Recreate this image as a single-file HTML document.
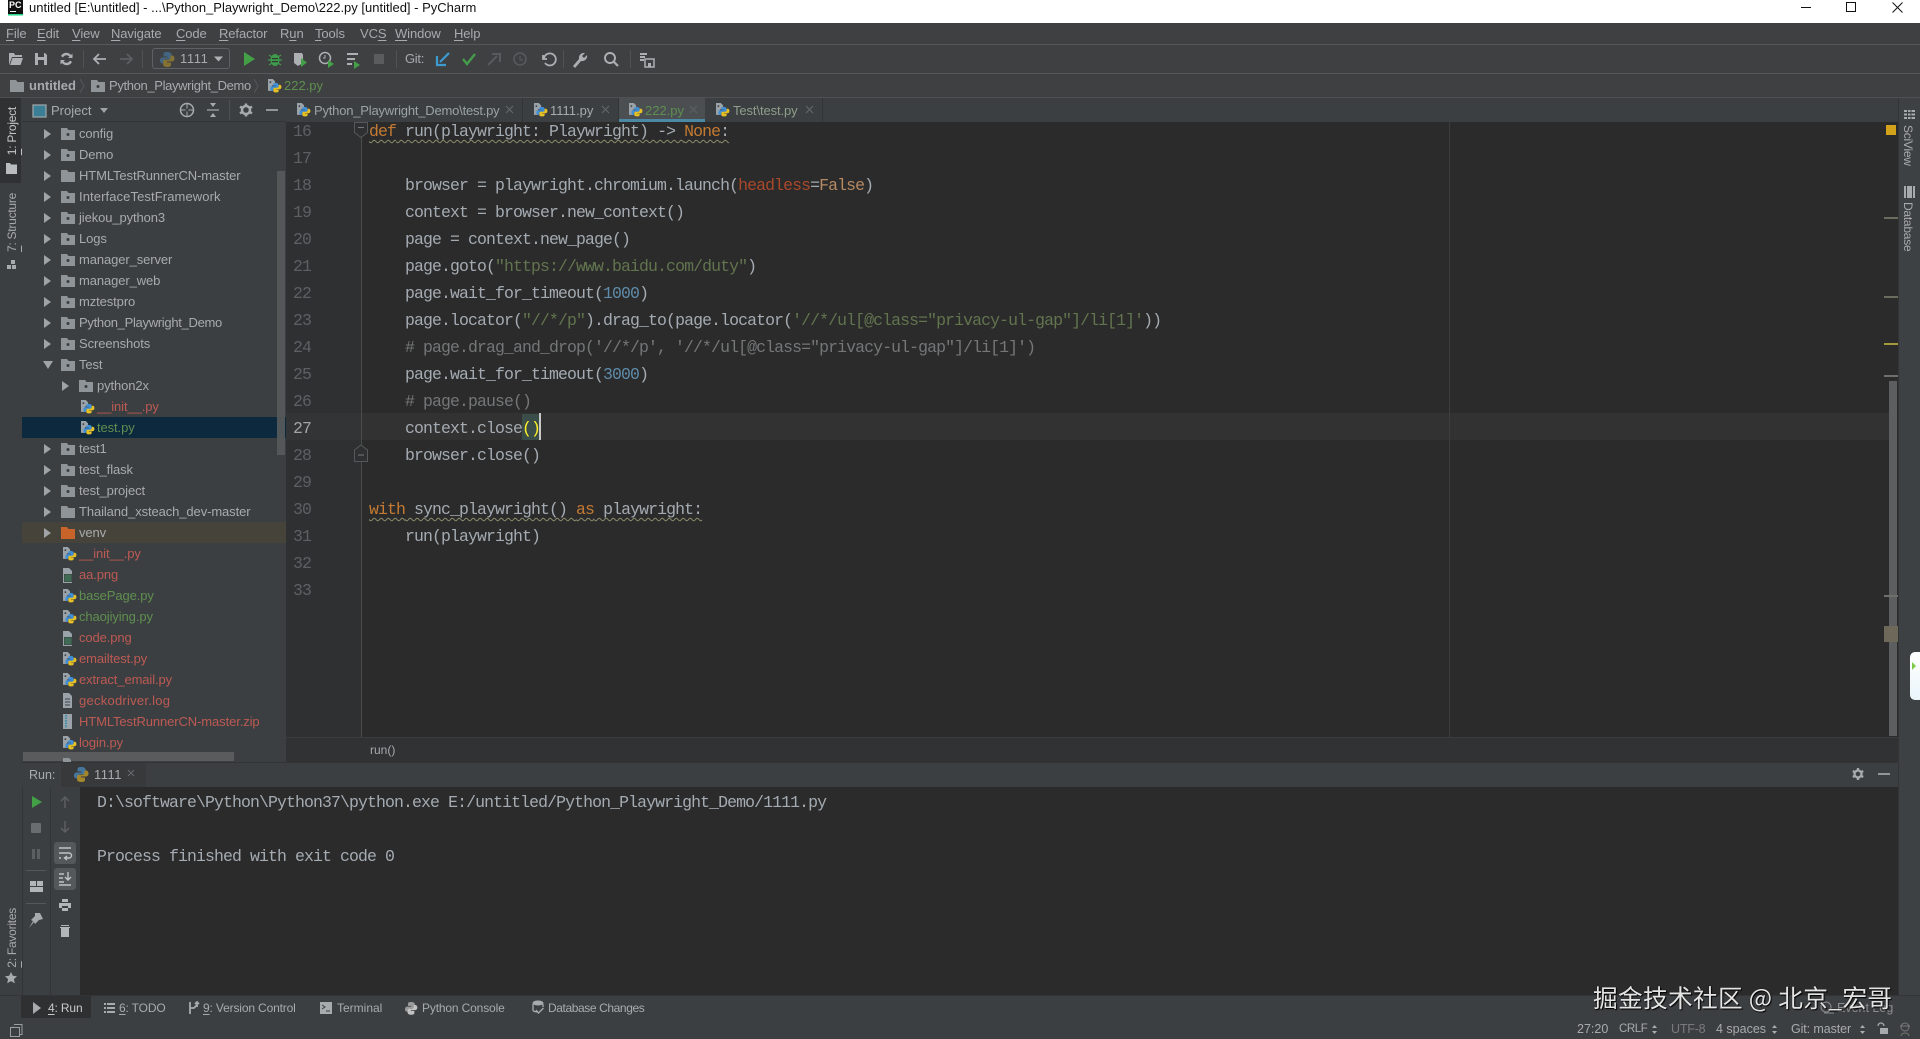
<!DOCTYPE html>
<html><head><meta charset="utf-8"><title>PyCharm</title>
<style>
html,body{margin:0;padding:0;width:1920px;height:1039px;overflow:hidden;background:#3c3f41}
body{position:relative;font-family:"Liberation Sans","Noto Sans CJK SC",sans-serif;font-size:13px;color:#a8abad}
div,span.t{position:absolute}
.b{position:absolute}
.t{position:absolute;white-space:pre;line-height:20px;letter-spacing:-.1px}
u{text-decoration-thickness:1px;text-underline-offset:2px}
.r{color:#bd5a54}.g{color:#5f8f50}.o{color:#c7662c}
.c{position:absolute;left:369px;white-space:pre;font-family:"Liberation Mono",monospace;font-size:16.5px;letter-spacing:-.9px;line-height:27px;color:#a4abb2;height:27px}
.n{position:absolute;left:293px;width:20px;font-family:"Liberation Mono",monospace;font-size:16.5px;letter-spacing:-.9px;line-height:27px;color:#5d6063}
.k{color:#c47a32}.s{color:#62744e}.m{color:#5f8cab}.h{color:#747678}.p{color:#a9482a}
.w{text-decoration:underline wavy #8d8d6c 1px;text-underline-offset:3px}
.v{writing-mode:vertical-rl;white-space:pre;position:absolute;line-height:16px;font-size:12px;letter-spacing:-.25px;color:#a8abad}
.vl{transform:rotate(180deg)}
.tb{font-size:12px;letter-spacing:-.15px;top:998px}
.st{font-size:12.5px;letter-spacing:0;top:1019px}
</style></head>
<body>
<!-- backgrounds -->
<div class="b" style="left:0;top:0;width:1920px;height:23px;background:#fff"></div>
<div class="b" style="left:0;top:23px;width:1920px;height:74px;background:#3e4042"></div>
<div class="b" style="left:0;top:44px;width:1920px;height:1px;background:#555759"></div>
<div class="b" style="left:0;top:73px;width:1920px;height:1px;background:#555759"></div>
<div class="b" style="left:0;top:97px;width:1920px;height:1px;background:#4e5052"></div>
<div class="b" style="left:0;top:98px;width:22px;height:899px;background:#3c3f41"></div>
<div class="b" style="left:0;top:98px;width:21px;height:85px;background:#2f3132"></div>
<div class="b" style="left:22px;top:98px;width:264px;height:665px;background:#3c3f41;overflow:hidden"></div>
<div class="b" style="left:22px;top:121px;width:264px;height:1px;background:#323435"></div>
<div class="b" style="left:22px;top:417px;width:264px;height:21px;background:#0d293e"></div>
<div class="b" style="left:22px;top:522px;width:264px;height:21px;background:#46433a"></div>
<div class="b" style="left:277px;top:171px;width:8px;height:284px;background:#55585a;opacity:.95"></div>
<div class="b" style="left:23px;top:752px;width:211px;height:9px;background:#595b5d"></div>
<!-- tab bar -->
<div class="b" style="left:286px;top:98px;width:1612px;height:24px;background:#3c3f41"></div>
<div class="b" style="left:618px;top:98px;width:87px;height:21px;background:#4b4f52"></div>
<div class="b" style="left:618px;top:119px;width:87px;height:3px;background:#4a88a3"></div>
<div class="b" style="left:522px;top:98px;width:1px;height:24px;background:#323435"></div>
<div class="b" style="left:618px;top:98px;width:1px;height:24px;background:#323435"></div>
<div class="b" style="left:822px;top:98px;width:1px;height:24px;background:#323435"></div>
<!-- editor -->
<div class="b" style="left:286px;top:122px;width:1612px;height:615px;background:#2b2b2b"></div>
<div class="b" style="left:286px;top:122px;width:75px;height:615px;background:#2f3031"></div>
<div class="b" style="left:361px;top:413px;width:1528px;height:27px;background:#323232"></div>
<div class="b" style="left:286px;top:413px;width:75px;height:27px;background:#333435"></div>
<div class="b" style="left:361px;top:122px;width:1px;height:615px;background:#4a4c4e"></div>
<div class="b" style="left:1449px;top:122px;width:1px;height:615px;background:#3d3d3d"></div>
<div class="b" style="left:522px;top:414px;width:18px;height:26px;background:#3a4d48"></div>
<div class="b" style="left:539px;top:413px;width:2px;height:27px;background:#c8c8c8"></div>
<div class="b" style="left:286px;top:737px;width:1612px;height:1px;background:#3a3c3d"></div>
<div class="b" style="left:286px;top:738px;width:1612px;height:24px;background:#303233"></div>
<!-- right stripe -->
<div class="b" style="left:1886px;top:125px;width:10px;height:10px;background:#d4a21a"></div>
<div class="b" style="left:1884px;top:217px;width:14px;height:2px;background:#6b6c60"></div>
<div class="b" style="left:1884px;top:296px;width:14px;height:2px;background:#6b6c60"></div>
<div class="b" style="left:1884px;top:343px;width:14px;height:2px;background:#a39a3c"></div>
<div class="b" style="left:1884px;top:375px;width:14px;height:2px;background:#6e6f6a"></div>
<div class="b" style="left:1889px;top:381px;width:8px;height:355px;background:#5c5e5f"></div>
<div class="b" style="left:1884px;top:595px;width:14px;height:2px;background:#6e6f6a"></div>
<div class="b" style="left:1884px;top:626px;width:14px;height:16px;background:#6e685a"></div>
<div class="b" style="left:1898px;top:98px;width:22px;height:897px;background:#3e4143;border-left:1px solid #323435;box-sizing:border-box"></div>
<div class="b" style="left:1910px;top:652px;width:10px;height:48px;background:linear-gradient(#fff,#eaf5fb);border-radius:5px 0 0 5px"></div>
<!-- run panel -->
<div class="b" style="left:22px;top:762px;width:1876px;height:1px;background:#323435"></div>
<div class="b" style="left:22px;top:763px;width:1876px;height:24px;background:#3c3f41"></div>
<div class="b" style="left:61px;top:763px;width:85px;height:24px;background:#37393b"></div>
<div class="b" style="left:22px;top:787px;width:58px;height:208px;background:#3c3f41"></div>
<div class="b" style="left:22px;top:787px;width:1px;height:208px;background:#323435"></div>
<div class="b" style="left:50px;top:787px;width:1px;height:208px;background:#323435"></div>
<div class="b" style="left:80px;top:787px;width:1818px;height:208px;background:#2b2b2b"></div>
<div class="b" style="left:54px;top:842px;width:22px;height:22px;background:#55585a;border-radius:3px"></div>
<div class="b" style="left:54px;top:868px;width:22px;height:22px;background:#55585a;border-radius:3px"></div>
<div class="b" style="left:26px;top:870px;width:20px;height:1px;background:#555759"></div>
<div class="b" style="left:26px;top:903px;width:20px;height:1px;background:#555759"></div>
<!-- bottom -->
<div class="b" style="left:0;top:995px;width:1920px;height:44px;background:#3c3f41;border-top:1px solid #323435;box-sizing:border-box"></div>
<div class="b" style="left:21px;top:996px;width:70px;height:22px;background:#2e3031"></div>

<!-- title -->
<span class="t" style="left:29px;top:-2px;color:#111;font-size:13px;letter-spacing:0">untitled [E:\untitled] - ...\Python_Playwright_Demo\222.py [untitled] - PyCharm</span>
<div class="b" style="left:8px;top:0;width:15px;height:15px;background:#111;border:0;overflow:hidden"><span class="t" style="left:1px;top:-5px;font-size:9px;font-weight:bold;color:#fff;letter-spacing:0">PC</span><div class="b" style="left:2px;top:11px;width:6px;height:1px;background:#fff"></div></div>

<!-- menu -->
<span class="t" style="left:6px;top:24px"><u>F</u>ile</span>
<span class="t" style="left:37px;top:24px"><u>E</u>dit</span>
<span class="t" style="left:72px;top:24px"><u>V</u>iew</span>
<span class="t" style="left:111px;top:24px"><u>N</u>avigate</span>
<span class="t" style="left:176px;top:24px"><u>C</u>ode</span>
<span class="t" style="left:219px;top:24px"><u>R</u>efactor</span>
<span class="t" style="left:280px;top:24px">R<u>u</u>n</span>
<span class="t" style="left:315px;top:24px"><u>T</u>ools</span>
<span class="t" style="left:360px;top:24px">VC<u>S</u></span>
<span class="t" style="left:395px;top:24px"><u>W</u>indow</span>
<span class="t" style="left:454px;top:24px"><u>H</u>elp</span>

<!-- toolbar text -->
<div class="b" style="left:152px;top:48px;width:78px;height:21px;border:1px solid #5e6163;border-radius:3px;box-sizing:border-box"></div>
<span class="t" style="left:180px;top:49px;letter-spacing:.6px">1111</span>
<span class="t" style="left:405px;top:49px;letter-spacing:-.3px">Git:</span>

<!-- breadcrumbs -->
<span class="t" style="left:29px;top:76px;font-weight:bold;letter-spacing:0">untitled</span>
<span class="t" style="left:109px;top:76px;letter-spacing:-.35px">Python_Playwright_Demo</span>
<span class="t g" style="left:284px;top:76px;letter-spacing:0">222.py</span>

<!-- project header -->
<span class="t" style="left:51px;top:101px;letter-spacing:0">Project</span>

<!-- tabs -->
<span class="t" style="left:314px;top:101px;color:#9aa3a8;letter-spacing:-.2px">Python_Playwright_Demo\test.py</span>
<span class="t" style="left:550px;top:101px;letter-spacing:0">1111.py</span>
<span class="t g" style="left:645px;top:101px;letter-spacing:0">222.py</span>
<span class="t" style="left:733px;top:101px;color:#8f9e8b">Test\test.py</span>

<!-- tree -->
<span class="t" style="left:79px;top:124px">config</span>
<span class="t" style="left:79px;top:145px">Demo</span>
<span class="t" style="left:79px;top:166px">HTMLTestRunnerCN-master</span>
<span class="t" style="left:79px;top:187px;letter-spacing:.1px">InterfaceTestFramework</span>
<span class="t" style="left:79px;top:208px">jiekou_python3</span>
<span class="t" style="left:79px;top:229px">Logs</span>
<span class="t" style="left:79px;top:250px">manager_server</span>
<span class="t" style="left:79px;top:271px">manager_web</span>
<span class="t" style="left:79px;top:292px">mztestpro</span>
<span class="t" style="left:79px;top:313px;letter-spacing:-.3px">Python_Playwright_Demo</span>
<span class="t" style="left:79px;top:334px">Screenshots</span>
<span class="t" style="left:79px;top:355px">Test</span>
<span class="t" style="left:97px;top:376px">python2x</span>
<span class="t r" style="left:97px;top:397px">__init__.py</span>
<span class="t g" style="left:97px;top:418px">test.py</span>
<span class="t" style="left:79px;top:439px">test1</span>
<span class="t" style="left:79px;top:460px">test_flask</span>
<span class="t" style="left:79px;top:481px">test_project</span>
<span class="t" style="left:79px;top:502px">Thailand_xsteach_dev-master</span>
<span class="t" style="left:79px;top:523px">venv</span>
<span class="t r" style="left:79px;top:544px">__init__.py</span>
<span class="t r" style="left:79px;top:565px">aa.png</span>
<span class="t g" style="left:79px;top:586px">basePage.py</span>
<span class="t g" style="left:79px;top:607px">chaojiying.py</span>
<span class="t r" style="left:79px;top:628px">code.png</span>
<span class="t r" style="left:79px;top:649px">emailtest.py</span>
<span class="t r" style="left:79px;top:670px">extract_email.py</span>
<span class="t r" style="left:79px;top:691px;letter-spacing:.25px">geckodriver.log</span>
<span class="t r" style="left:79px;top:712px">HTMLTestRunnerCN-master.zip</span>
<span class="t r" style="left:79px;top:733px">login.py</span>

<!-- gutter numbers -->
<div class="n" style="top:118px">16</div>
<div class="n" style="top:145px">17</div>
<div class="n" style="top:172px">18</div>
<div class="n" style="top:199px">19</div>
<div class="n" style="top:226px">20</div>
<div class="n" style="top:253px">21</div>
<div class="n" style="top:280px">22</div>
<div class="n" style="top:307px">23</div>
<div class="n" style="top:334px">24</div>
<div class="n" style="top:361px">25</div>
<div class="n" style="top:388px">26</div>
<div class="n" style="top:415px;color:#a4a3a3">27</div>
<div class="n" style="top:442px">28</div>
<div class="n" style="top:469px">29</div>
<div class="n" style="top:496px">30</div>
<div class="n" style="top:523px">31</div>
<div class="n" style="top:550px">32</div>
<div class="n" style="top:577px">33</div>

<!-- code -->
<div class="c" style="top:118px"><span class="w"><span class="k">def</span> run(playwright: Playwright) -&gt; <span class="k">None</span>:</span></div>
<div class="c" style="top:172px">    browser = playwright.chromium.launch(<span class="p">headless</span>=<span style="color:#b58a63">False</span>)</div>
<div class="c" style="top:199px">    context = browser.new_context()</div>
<div class="c" style="top:226px">    page = context.new_page()</div>
<div class="c" style="top:253px">    page.goto(<span class="s">"https://www.baidu.com/duty"</span>)</div>
<div class="c" style="top:280px">    page.wait_for_timeout(<span class="m">1000</span>)</div>
<div class="c" style="top:307px">    page.locator(<span class="s">"//*/p"</span>).drag_to(page.locator(<span class="s">'//*/ul[@class="privacy-ul-gap"]/li[1]'</span>))</div>
<div class="c" style="top:334px;color:#747678">    # page.drag_and_drop('//*/p', '//*/ul[@class="privacy-ul-gap"]/li[1]')</div>
<div class="c" style="top:361px">    page.wait_for_timeout(<span class="m">3000</span>)</div>
<div class="c" style="top:388px;color:#747678">    # page.pause()</div>
<div class="c" style="top:415px">    context.close<span style="color:#ffef28">()</span></div>
<div class="c" style="top:442px">    browser.close()</div>
<div class="c" style="top:496px"><span class="w"><span class="k">with</span> sync_playwright() <span class="k">as</span> playwright:</span></div>
<div class="c" style="top:523px">    run(playwright)</div>
<span class="t" style="left:370px;top:740px;font-size:12px;letter-spacing:0">run()</span>

<!-- run panel text -->
<span class="t" style="left:29px;top:765px;font-size:12.5px;letter-spacing:0">Run:</span>
<span class="t" style="left:94px;top:765px;letter-spacing:.5px">1111</span>
<div class="c" style="left:97px;top:789px">D:\software\Python\Python37\python.exe E:/untitled/Python_Playwright_Demo/1111.py</div>
<div class="c" style="left:97px;top:843px">Process finished with exit code 0</div>

<!-- side labels -->
<div class="v vl" style="left:4px;top:107px;color:#c4c6c8"><u>1</u>: Project</div>
<div class="v vl" style="left:4px;top:193px"><u>7</u>: Structure</div>
<div class="v vl" style="left:4px;top:908px"><u>2</u>: Favorites</div>
<div class="v" style="left:1900px;top:125px">SciView</div>
<div class="v" style="left:1900px;top:202px">Database</div>

<!-- tool window bar -->
<span class="t tb" style="left:48px;color:#c8cacc"><u>4</u>: Run</span>
<span class="t tb" style="left:119px"><u>6</u>: TODO</span>
<span class="t tb" style="left:203px"><u>9</u>: Version Control</span>
<span class="t tb" style="left:337px;letter-spacing:0">Terminal</span>
<span class="t tb" style="left:422px">Python Console</span>
<span class="t tb" style="left:548px;letter-spacing:-.4px">Database Changes</span>

<!-- status -->
<span class="t st" style="left:1577px">27:20</span>
<span class="t st" style="left:1619px;font-size:11.5px;letter-spacing:-.4px">CRLF</span>
<span class="t st" style="left:1671px;color:#787a7c;letter-spacing:-.2px">UTF-8</span>
<span class="t st" style="left:1716px">4 spaces</span>
<span class="t st" style="left:1791px;letter-spacing:-.1px">Git: master</span>
<span class="t" style="left:1837px;top:998px;font-size:12.5px;letter-spacing:0;color:#8a8c8e">Event Log</span>

<!-- icons -->
<svg width="1920" height="1039" viewBox="0 0 1920 1039" style="position:absolute;left:0;top:0">
<defs>
<g id="py" transform="scale(.79)"><path d="M0 0h6l3 3v5H5v7H0z" fill="#9aa3a9"/><rect x="2" y="3" width="2" height="2" fill="#3c3f41"/><path d="M10 5c-2.500 0-3.500.8-3.500 2v1.500H10v.7H5.200C3.900 9.200 3 10.200 3 12s.9 3 2.100 3h1.400v-2c0-1 .9-1.800 1.900-1.800h3.200c1 0 1.700-.7 1.700-1.700V7c0-1.200-1.200-2-3.300-2z" fill="#3f8fd8"/><path d="M10 17c2.500 0 3.500-.8 3.500-2v-1.500H10v-.6h4.800c1.300 0 2.200-1 2.200-2.900 0-1.500-.9-2.800-2.100-2.800h-1.400v2c0 1-.9 1.800-1.900 1.800H8.400c-1 0-1.700.7-1.700 1.700V15c0 1.200 1.200 2 3.300 2z" fill="#e6c125"/></g>
<g id="pyl"><path d="M7 0C4 0 3.500 1 3.500 2.500v2H7.500v1H2.500C1 5.500 0 6.700 0 8.500s1 3 2.500 3H4V9.500c0-1.300 1-2.200 2.300-2.200h3.300c1.100 0 1.900-.8 1.900-1.900V2.500C11.500 1 10 0 7 0z" fill="#4b8bbe"/><path d="M7.500 15c3 0 3.500-1 3.500-2.500v-2H7v-1h5c1.500 0 2.500-1.200 2.500-3s-1-3-2.500-3h-1.500v2c0 1.300-1 2.200-2.300 2.200H5c-1.100 0-1.900.8-1.900 1.900v2.900C3.100 14 4.500 15 7.500 15z" fill="#c9a227"/></g>
<g id="fd"><path d="M0 0h6l1.500 2H14v10H0z" fill="#8f9498"/><rect x="5.500" y="5" width="3" height="3" rx="1.500" fill="#3c3f41"/></g>
<g id="fdn"><path d="M0 0h6l1.500 2H14v10H0z" fill="#8f9498"/></g>
<polygon id="ar" points="0,0 7,5 0,10" fill="#a0a3a5"/>
<g id="img"><path d="M0 0h6l3 3v12H0z" fill="#9aa3a9" /><rect x="1" y="6" width="8" height="8" fill="#3c3f41"/><rect x="1.500" y="6.500" width="7" height="7" fill="#3f6b55"/></g>
</defs>
<!-- window buttons -->
<path d="M1801 7.500h10" stroke="#111" stroke-width="1"/>
<rect x="1846.500" y="2.500" width="9" height="9" fill="none" stroke="#111"/>
<path d="M1892.500 2.500l10 10M1902.500 2.500l-10 10" stroke="#111" stroke-width="1"/>
<!-- PC edge -->
<rect x="8" y="14" width="15" height="1.500" fill="#21d789"/>

<!-- toolbar icons -->
<path d="M9 53h5l1 2h7v2H12l-3 8zM10 65l2.500-7H23l-2.500 7z" fill="#adb0b2"/>
<path d="M35 53h10l2 2v10H35z" fill="#adb0b2"/><rect x="38" y="53" width="6" height="4" fill="#3e4042"/><rect x="38" y="60" width="6" height="5" fill="#3e4042"/>
<path d="M61 56a6 6 0 0 1 10-1l1.500-1.500V58h-4.500l1.500-1.500a4 4 0 0 0-6.500 1M72 62a6 6 0 0 1-10 1l-1.500 1.500V60h4.500L63.500 61.500a4 4 0 0 0 6.500-1" fill="#adb0b2"/>
<path d="M106 59H94M99 54l-5 5 5 5" fill="none" stroke="#adb0b2" stroke-width="1.800"/>
<path d="M120 59h12M127 54l5 5-5 5" fill="none" stroke="#5c5f61" stroke-width="1.800"/>
<rect x="83" y="50" width="1" height="18" fill="#505254"/><rect x="142" y="50" width="1" height="18" fill="#505254"/>
<use href="#pyl" transform="translate(160 52)" opacity=".5"/>
<path d="M214 56.500h9l-4.500 5z" fill="#adb0b2"/>
<path d="M244 52l11 7-11 7z" fill="#43a047"/>
<ellipse cx="275" cy="60" rx="4.500" ry="6" fill="#3f9a4b"/><path d="M269 55l3 2M281 55l-3 2M268 60h3M279 60h3M269 65l3-2M281 65l-3-2" stroke="#3f9a4b" stroke-width="1.200"/><rect x="272" y="58" width="6" height="1.200" fill="#2e3a30"/><rect x="272" y="61" width="6" height="1.200" fill="#2e3a30"/>
<path d="M294 53h8l1 2v8l-5 3-4-3z" fill="#adb0b2"/><path d="M301 58l6 4.500-6 4.500z" fill="#43a047"/>
<circle cx="325" cy="58" r="5.500" fill="none" stroke="#adb0b2" stroke-width="1.500"/><path d="M325 55v3h-2" stroke="#adb0b2" fill="none"/><path d="M328 60l6 4-6 4z" fill="#43a047"/>
<path d="M347 53h11v2h-11zM347 58h8v2h-8zM347 63h5v2h-5z" fill="#adb0b2"/><path d="M354 61l6 4-6 4z" fill="#43a047"/>
<rect x="374" y="54" width="10" height="10" fill="#5a5c5e"/>
<rect x="396" y="50" width="1" height="18" fill="#505254"/><rect x="563" y="50" width="1" height="18" fill="#505254"/><rect x="630" y="50" width="1" height="18" fill="#505254"/>
<path d="M449 53l-9 9M437 56v9h9" fill="none" stroke="#3d9ad1" stroke-width="2.200"/>
<path d="M463 59l4 5 8-10" fill="none" stroke="#449c4c" stroke-width="2.400"/>
<path d="M488 65l9-9M492 54h8v8" fill="none" stroke="#585b5d" stroke-width="2"/>
<circle cx="520" cy="59" r="6" fill="none" stroke="#585b5d" stroke-width="1.500"/><path d="M520 56v4h3" fill="none" stroke="#585b5d"/>
<path d="M543 55v4h4M544 58a6 6 0 1 1 1 5" fill="none" stroke="#adb0b2" stroke-width="1.800"/>
<path d="M573 66l6-7a5 5 0 0 1 6-6l-3 3 2 2 3-3a5 5 0 0 1-6 6l-6 7z" fill="#adb0b2"/>
<circle cx="610" cy="58" r="5" fill="none" stroke="#adb0b2" stroke-width="1.900"/><path d="M614 62l4 4" stroke="#adb0b2" stroke-width="2.200"/>
<path d="M640 53h7v2h-7zM640 56h5v2h-5zM640 59h4v2h-4z" fill="#adb0b2"/><rect x="645" y="59" width="9" height="8" fill="none" stroke="#adb0b2" stroke-width="1.500"/><rect x="648" y="63" width="3" height="4" fill="#adb0b2"/>

<!-- breadcrumbs -->
<use href="#fdn" transform="translate(10 80)"/>
<path d="M80 79l4 7-4 7M254 79l4 7-4 7" fill="none" stroke="#55585a"/>
<use href="#fd" transform="translate(91 80)"/>
<use href="#py" x="268" y="79"/>

<!-- project header -->
<rect x="33" y="105" width="13" height="12" fill="#3a7f96" stroke="#9aa3a9" stroke-width="1.300"/>
<path d="M100 108h8l-4 5z" fill="#a0a3a5"/>
<circle cx="187" cy="110" r="6.500" fill="none" stroke="#a8abad" stroke-width="1.500"/><path d="M187 103v14M180 110h14" stroke="#a8abad"/><circle cx="187" cy="110" r="1.500" fill="#3c3f41"/>
<path d="M207 110h12" stroke="#a8abad" stroke-width="1.200"/><path d="M210 103h6l-3 4zM210 117h6l-3-4z" fill="#a8abad"/>
<rect x="229" y="100" width="1" height="20" fill="#4e5052"/>
<g transform="translate(246 110)"><circle r="4" fill="none" stroke="#a8abad" stroke-width="2.500"/><path d="M0-6.500V-4M0 4V6.500M-6-3.300L-3.600-2M3.600 2L6 3.300M-6 3.300L-3.600 2M3.600-2L6-3.300" stroke="#a8abad" stroke-width="2.500"/></g>
<path d="M266 110h12" stroke="#a8abad" stroke-width="1.600"/>

<!-- tabs -->
<use href="#py" x="297" y="103"/>
<use href="#py" x="534" y="103"/>
<use href="#py" x="629" y="103"/>
<use href="#py" x="716" y="103"/>
<path d="M506 106l7 7M513 106l-7 7M602 106l7 7M609 106l-7 7M806 106l7 7M813 106l-7 7" stroke="#66696b"/>
<path d="M690 106l7 7M697 106l-7 7" stroke="#5e6264"/>

<!-- tree arrows -->
<use href="#ar" x="44" y="129"/><use href="#ar" x="44" y="150"/><use href="#ar" x="44" y="171"/><use href="#ar" x="44" y="192"/><use href="#ar" x="44" y="213"/><use href="#ar" x="44" y="234"/><use href="#ar" x="44" y="255"/><use href="#ar" x="44" y="276"/><use href="#ar" x="44" y="297"/><use href="#ar" x="44" y="318"/><use href="#ar" x="44" y="339"/>
<polygon points="43,361 53,361 48,369" fill="#a0a3a5"/>
<use href="#ar" x="62" y="381"/><use href="#ar" x="44" y="444"/><use href="#ar" x="44" y="465"/><use href="#ar" x="44" y="486"/><use href="#ar" x="44" y="507"/><use href="#ar" x="44" y="528"/>
<!-- folders -->
<use href="#fd" x="61" y="128"/><use href="#fd" x="61" y="149"/><use href="#fdn" x="61" y="170"/><use href="#fd" x="61" y="191"/><use href="#fd" x="61" y="212"/><use href="#fd" x="61" y="233"/><use href="#fd" x="61" y="254"/><use href="#fd" x="61" y="275"/><use href="#fd" x="61" y="296"/><use href="#fd" x="61" y="317"/><use href="#fd" x="61" y="338"/><use href="#fd" x="61" y="359"/><use href="#fd" x="79" y="380"/><use href="#fd" x="61" y="443"/><use href="#fd" x="61" y="464"/><use href="#fd" x="61" y="485"/><use href="#fdn" x="61" y="506"/>
<path d="M61 527h6l1.500 2H75v10H61z" fill="#c8642a"/>
<!-- files -->
<use href="#py" x="81" y="400"/><use href="#py" x="81" y="421"/>
<use href="#py" x="63" y="547"/><use href="#py" x="63" y="589"/><use href="#py" x="63" y="610"/><use href="#py" x="63" y="652"/><use href="#py" x="63" y="673"/><use href="#py" x="63" y="736"/>
<use href="#img" x="63" y="568"/><use href="#img" x="63" y="631"/>
<path d="M63 693h6l3 3v12h-9z" fill="#9aa3a9"/><path d="M65 699h5M65 702h5M65 705h5" stroke="#3c3f41"/>
<path d="M63 714h9v15h-9z" fill="#9aa3a9"/><path d="M66 715v13" stroke="#3f8fa8" stroke-width="2" stroke-dasharray="1.500 1"/>
<path d="M63 758h6l2 2v2h-8z" fill="#8f9498"/>
<!-- folds -->
<path d="M354.500 122.500h13v10l-6.500 5-6.500-5z" fill="#2f3031" stroke="#55585a"/><path d="M358 127.500h6" stroke="#77797b"/>
<path d="M361 445l6.500 5v11.500h-13V450z" fill="#2f3031" stroke="#55585a"/><path d="M358 455h6" stroke="#77797b"/>

<!-- right strip icons -->
<path d="M1904 110h11v2h-11zM1904 113.500h11v2h-11zM1904 117h11v2h-11z" fill="#a8abad"/><path d="M1907.500 110v9M1911 110v9" stroke="#3e4143"/>
<path d="M1904 186h11v12h-11z" fill="#a8abad"/><path d="M1906.500 186v12M1912.500 186v12" stroke="#3e4143"/>
<path d="M1912 662l4 4-4 4z" fill="#7ecb4a"/>

<!-- run bar -->
<use href="#pyl" transform="translate(74 767)" opacity=".75"/>
<path d="M128 770l6 6M134 770l-6 6" stroke="#686b6d"/>
<g transform="translate(1858 774)"><circle r="3.500" fill="none" stroke="#a8abad" stroke-width="2.300"/><path d="M0-6V-3.500M0 3.500V6M-5.200-3L-3-1.800M3 1.800L5.200 3M-5.200 3L-3 1.800M3-1.800L5.200-3" stroke="#a8abad" stroke-width="2.300"/></g>
<path d="M1878 774h12" stroke="#a8abad" stroke-width="1.600"/>
<!-- run toolbar -->
<path d="M32 796l10 6-10 6z" fill="#43a047"/>
<rect x="31" y="823" width="10" height="10" rx="1" fill="#6a6d6f"/>
<path d="M32 849h3v10h-3zM37 849h3v10h-3z" fill="#5c5f61"/>
<path d="M30 886v-5h6v5zM37 886v-5h6v5zM30 892v-5h13v5z" fill="#b3b6b8"/>
<path d="M40 913l3 6-4 1-4 4-1-2-5 6 4-7-2-1 4-4 0-3z" fill="#a8abad"/>
<path d="M65 808v-11M61 801l4-4 4 4" fill="none" stroke="#5c5f61" stroke-width="1.500"/>
<path d="M65 821v11M61 828l4 4 4-4" fill="none" stroke="#5c5f61" stroke-width="1.500"/>
<path d="M59 848h12M59 853h10a2.500 2.500 0 0 1 0 5h-4M59 858h2M67 856l-2.500 2 2.500 2" fill="none" stroke="#c0c3c5" stroke-width="1.400"/>
<path d="M59 874h5M59 878h4M59 882h5M59 885h12M68 872v8M65 877l3 3 3-3" fill="none" stroke="#c0c3c5" stroke-width="1.400"/>
<path d="M62 899h6v3h-6zM59 903h12v5h-3v-2h-6v2h-3zM62 908h6v3h-6z" fill="#b3b6b8"/>
<path d="M61 926h8v-1h-8zM60 927h10v1H69v9h-8v-9h-1z" fill="#b3b6b8"/>
<!-- favorites -->
<path d="M11 972l1.800 3.800 4.200.5-3.100 2.800.9 4.100-3.800-2.100-3.800 2.100.9-4.100-3.100-2.800 4.200-.5z" fill="#a8abad"/>
<!-- Structure/Project strip icons -->
<path d="M6 163h4l1 1.500h6V174H6z" fill="#b9bcbe"/>
<path d="M11 260h4v4h-4zM7 265h4v4H7zM12 265h4v4h-4z" fill="#a8abad"/>

<!-- bottom icons -->
<path d="M33 1002l8 6-8 6z" fill="#a8abad"/>
<path d="M104 1003h2v2h-2zM104 1007h2v2h-2zM104 1011h2v2h-2zM107 1003h8v2h-8zM107 1007h8v2h-8zM107 1011h8v2h-8z" fill="#a8abad"/>
<path d="M190 1002v12M190 1008h4l3-3M197 1002v5M195 1004l2-2 2 2" fill="none" stroke="#a8abad" stroke-width="1.800"/>
<rect x="320" y="1002" width="12" height="12" fill="#a8abad"/><path d="M322 1005l3 2-3 2M326 1011h4" fill="none" stroke="#3c3f41"/>
<use href="#pyl" transform="translate(405 1002) scale(.85)" style="filter:grayscale(1) brightness(1.2)"/>
<ellipse cx="538" cy="1003" rx="5.500" ry="2.500" fill="#a8abad"/><path d="M533 1004v6c0 1 2 2 5 2M543 1004v3" fill="none" stroke="#a8abad" stroke-width="1.300"/><path d="M536 1010l2.500 3 5-5" fill="none" stroke="#a8abad" stroke-width="1.300"/>
<!-- status icons -->
<path d="M14 1024.500h8v10h-9v-8" fill="none" stroke="#9a9d9f"/><rect x="10.500" y="1027.500" width="9" height="9" fill="#3c3f41" stroke="#9a9d9f"/>
<path d="M1652 1028l2.500-3 2.500 3zM1652 1031l2.500 3 2.500-3zM1772 1028l2.500-3 2.500 3zM1772 1031l2.500 3 2.500-3zM1860 1028l2.500-3 2.500 3zM1860 1031l2.500 3 2.500-3z" fill="#a8abad"/>
<path d="M1878 1026a3 3 0 0 1 6 0" fill="none" stroke="#a8abad" stroke-width="1.300"/><rect x="1880" y="1028" width="8" height="6" fill="#a8abad"/>
<circle cx="1905" cy="1027" r="4" fill="none" stroke="#77797b"/><path d="M1900 1026h10M1901 1036c0-4 8-4 8 0" fill="none" stroke="#77797b"/>
<!-- event log -->
<circle cx="1826" cy="1007" r="5" fill="none" stroke="#8a8c8e"/><path d="M1824 1013h10" stroke="#8a8c8e"/>
</svg>

<!-- watermark -->
<span class="t" style="left:1593px;top:980px;line-height:34px;font-size:24.7px;letter-spacing:.3px;color:#e4e4e4;font-family:'Noto Sans CJK SC','Liberation Sans',sans-serif;text-shadow:1px 1px 1px #000,0 0 1px #000;z-index:5">掘金技术社区 @ 北京_宏哥</span>
</body></html>
